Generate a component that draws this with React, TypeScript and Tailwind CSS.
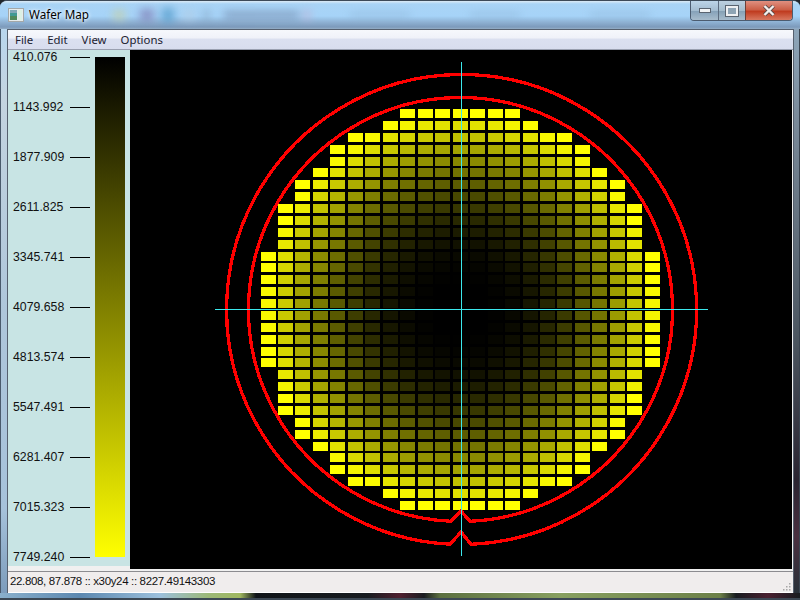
const labels = ["410.076","1143.992","1877.909","2611.825","3345.741","4079.658","4813.574","5547.491","6281.407","7015.323","7749.240"];
const menus = ["File","Edit","View","Options"];
const spans: [number, number][] = [[8,14],[7,15],[5,17],[4,18],[4,18],[3,19],[2,20],[2,20],[1,21],[1,21],[1,21],[1,21]];
const rowSpan = (j: number): [number, number] => {
  const k = j > 16 ? 33 - j : j;
  return k < spans.length ? spans[k] : [0, 22];
};
const hex = (n: number) => n.toString(16).padStart(2, "0");
const cells: { x: number; y: number; c: string }[] = [];
for (let j = 0; j < 34; j++) {
  const [a, b] = rowSpan(j);
  for (let i = a; i <= b; i++) {
    const x = Math.floor(261 + 17.47 * i);
    const y = Math.round(109 + 11.875 * j);
    const r = Math.hypot(x + 7.5 - 461, y + 4.5 - 309.5);
    const t = Math.min(1, Math.max(0, (r - 20) / 175));
    const v = hex(Math.round(255 * t * t));
    cells.push({ x, y, c: `#${v}${v}00` });
  }
}
const ring = (r: number, apex: number, lx: number, rx: number) => {
  const y = (x: number) => (309.5 + Math.sqrt(r * r - (x - 461) * (x - 461))).toFixed(1);
  return `M${rx} ${y(rx)} A${r} ${r} 0 1 0 ${lx} ${y(lx)} L461 ${apex} Z`;
};

function Blob({ c }: { c: string }) {
  return <div className={c} />;
}

export default function App() {
  return (
    <div className="w-[800px] h-[600px] bg-[#20262c] overflow-hidden">
      <div className="w-full h-full flex flex-col rounded-t-[7px] overflow-hidden border-t border-[#3d4a58] bg-[#a8d2f2]">
        <div className="relative h-[28px] shrink-0 flex items-start bg-[linear-gradient(to_bottom,#dbeaf5_0px,#a9d4f6_3px,#a6d3f8_15px,#8fb2d4_21px,#7c9abb_26px,#95aec6_28px)]">
          <div className="absolute inset-0 flex items-center blur-[4px] opacity-70">
            <Blob c="ml-[113px] w-[12px] h-[10px] bg-[#c8d0a0]" />
            <Blob c="ml-[15px] w-[14px] h-[12px] bg-[#7c78b0]" />
            <Blob c="ml-[8px] w-[12px] h-[14px] bg-[#4a94c4]" />
            <Blob c="ml-[10px] w-[10px] h-[10px] bg-[#b4cce0]" />
            <Blob c="ml-[10px] w-[5px] h-[8px] bg-[#7890a8]" />
            <Blob c="ml-[15px] w-[75px] h-[6px] bg-[#6c7c9c]" />
            <Blob c="ml-[5px] w-[6px] h-[10px] bg-[#c0a8c8]" />
            <Blob c="ml-[40px] w-[60px] h-[4px] bg-[#8cb0d0]" />
            <Blob c="ml-[60px] w-[50px] h-[4px] bg-[#8cb0d0]" />
            <Blob c="ml-[70px] w-[60px] h-[4px] bg-[#8cb0d0]" />
          </div>
          <div className="relative flex items-center h-[28px] pl-[8px] flex-1">
            <svg width="16" height="14" viewBox="0 0 16 14" className="shrink-0 mb-[1px]">
              <rect x="0.5" y="0.5" width="15" height="13" fill="#e6ecec" stroke="#a4a8a8" />
              <rect x="2" y="2" width="7" height="10" fill="#3f9a94" />
              <rect x="2" y="2" width="7" height="3" fill="#7fa8b8" />
              <rect x="2" y="8" width="7" height="4" fill="#4f8a5c" />
              <rect x="10" y="2" width="4" height="10" fill="#dcf0e4" />
            </svg>
            <span className="ml-[5px] mb-[1px] text-[11.7px] text-black [font-family:'Noto_Sans',sans-serif] [text-shadow:0_0_5px_#fff,0_0_3px_#fff]">Wafer Map</span>
          </div>
          <div className="relative flex h-[20px] mr-[7px] shrink-0 rounded-b-[4px] overflow-hidden border border-t-0 border-[#4c5c70]">
            <div className="w-[28px] flex items-center justify-center border-r border-[#5c6c80] bg-[linear-gradient(to_bottom,#bcd4e8,#a4bcd0_50%,#84a0b8_52%,#a8bccc)]">
              <div className="w-[12px] h-[5px] bg-[#f2f4f6] border border-[#5a6470]" />
            </div>
            <div className="w-[26px] flex items-center justify-center bg-[linear-gradient(to_bottom,#bcd0e0,#a4bccc_50%,#84a0b4_52%,#a8bccc)]">
              <div className="w-[12px] h-[10px] bg-[#8ea4b4] border-2 border-[#eef0f2] outline outline-[#5a6470]" />
            </div>
            <div className="w-[47px] flex items-center justify-center bg-[linear-gradient(to_bottom,#e09080,#cc6048_45%,#c03c20_55%,#d87860)] border-l border-[#6c4038]">
              <svg width="12" height="11" viewBox="0 0 12 11">
                <path d="M1.5 1 L10.5 10 M10.5 1 L1.5 10" stroke="#5a4a48" strokeWidth="4" />
                <path d="M1.5 1 L10.5 10 M10.5 1 L1.5 10" stroke="#f4f0ee" strokeWidth="2.4" />
              </svg>
            </div>
          </div>
        </div>
        <div className="flex-1 flex min-h-0">
          <div className="w-[7px] shrink-0 bg-[linear-gradient(to_bottom,#b8d6ee,#c4d4e0_12%,#aec6da_50%,#a6c2da_85%,#7c9cbc)] border-l border-[#4a5a6c]" />
          <div className="flex-1 flex flex-col min-w-0 border border-[#56606e] border-b-0 [font-family:'Liberation_Sans',sans-serif]">
            <div className="h-[20px] shrink-0 flex items-center gap-[14px] pl-[7px] bg-[linear-gradient(to_bottom,#f6f8fc,#f0f2f9_40%,#dbe0f0_50%,#d8ddee)] border-b border-[#9aa0b0] text-[11.4px] text-[#1c1c30] [font-family:'Noto_Sans',sans-serif]">
              {menus.map((m) => <span key={m} className="leading-none">{m}</span>)}
            </div>
            <div className="flex-1 flex min-h-0 bg-[#f0f0f0]">
              <div className="w-[122px] shrink-0 h-[516px] flex bg-[#c8e4e4]">
                <div className="w-[82px] h-[514px] flex flex-col justify-between">
                  {labels.map((l) => (
                    <div key={l} className="h-[14px] flex items-center">
                      <span className="w-[62px] pl-[5px] pt-[1px] text-[12.3px] leading-none text-[#111]">{l}</span>
                      <span className="w-[20px] h-px bg-black" />
                    </div>
                  ))}
                </div>
                <div className="ml-[5px] mt-[7px] w-[30px] h-[500px] bg-[linear-gradient(to_bottom,#000,#ff0)]" />
              </div>
              <svg width="662" height="519" viewBox="130 50 662 519" className="block bg-black shrink-0">
                <g shapeRendering="crispEdges">
                  {cells.map((c) => <rect key={`${c.x}-${c.y}`} x={c.x} y={c.y} width="15" height="9" fill={c.c} />)}
                  <path d={ring(212, 511, 451, 470)} fill="none" stroke="#ff0000" strokeWidth="3.3" />
                  <path d={ring(235, 532, 450, 471)} fill="none" stroke="#ff0000" strokeWidth="3.3" />
                  <rect x="461" y="62" width="1" height="494" fill="#3ce8ec" />
                  <rect x="215" y="309" width="493" height="1" fill="#3ce8ec" />
                </g>
              </svg>
            </div>
            <div className="relative h-[22px] shrink-0 flex items-center pl-[2px] bg-[#f0eded] border-t border-[#8c8c90] border-b border-b-white text-[11.5px] tracking-[-0.35px] text-[#111]">
              <span>22.808, 87.878 :: x30y24 :: 8227.49143303</span>
              <svg width="8" height="8" viewBox="0 0 8 8" className="absolute right-[2px] bottom-[1px]" fill="#a8a8a8">
                <rect x="6" y="0" width="1.5" height="1.5" />
                <rect x="3" y="3" width="1.5" height="1.5" /><rect x="6" y="3" width="1.5" height="1.5" />
                <rect x="0" y="6" width="1.5" height="1.5" /><rect x="3" y="6" width="1.5" height="1.5" /><rect x="6" y="6" width="1.5" height="1.5" />
              </svg>
            </div>
          </div>
          <div className="w-[6px] shrink-0 bg-[linear-gradient(to_bottom,#8ea6ba,#7c8c9c_15%,#4c5660_55%,#2a2430_80%,#4a3040_90%,#283038)] border-r border-[#3a4450]" />
        </div>
        <div className="h-[7px] shrink-0 border-b-2 border-[#3c4854] bg-[linear-gradient(to_right,#8ab0cc_0%,#5c88b0_10%,#9cc0dc_20%,#9cb878_26%,#a0b860_30%,#101418_32%,#181c20_46%,#502030_50%,#1a1c20_53%,#5c7040_55%,#88a060_70%,#6c8048_90%,#181c20_92%,#4a2030_96%,#181c20_100%)]" />
      </div>
    </div>
  );
}
